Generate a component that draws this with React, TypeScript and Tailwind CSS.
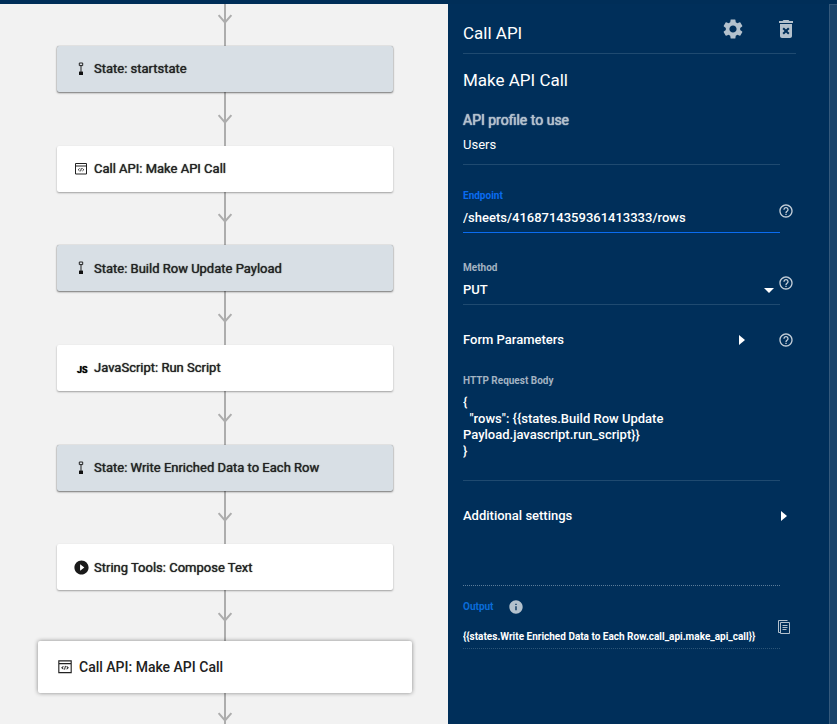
import type { ReactNode } from 'react';
import { MdDeleteForever, MdHelpOutline, MdInfo, MdPlayCircleFilled, MdSettings } from 'react-icons/md';

type Kind = 'state' | 'api' | 'js' | 'text';

const steps: { kind: Kind; label: string; selected?: boolean }[] = [
  { kind: 'state', label: 'State: startstate' },
  { kind: 'api', label: 'Call API: Make API Call' },
  { kind: 'state', label: 'State: Build Row Update Payload' },
  { kind: 'js', label: 'JavaScript: Run Script' },
  { kind: 'state', label: 'State: Write Enriched Data to Each Row' },
  { kind: 'text', label: 'String Tools: Compose Text' },
  { kind: 'api', label: 'Call API: Make API Call', selected: true },
];

function StepIcon({ kind, selected }: { kind: Kind; selected?: boolean }) {
  if (kind === 'state') {
    return (
      <svg viewBox="0 0 16 16" className="size-4" fill="none" stroke="#222" aria-hidden="true">
        <path d="M6.3 2h3.4v2.6H6.3z" strokeWidth="1" />
        <path d="M8 4.6V11" strokeWidth="1" />
        <path d="M6 10.6h4v3.4H6z" fill="#111" stroke="none" />
      </svg>
    );
  }
  if (kind === 'api') {
    return (
      <svg
        viewBox="0 0 16 16"
        className={`shrink-0 ${selected ? 'size-[18px]' : 'size-4'}`}
        fill="none"
        stroke="#222"
        aria-hidden="true"
      >
        <path d="M2.5 2.5h11v10.5h-11zM2.5 5h11" strokeWidth="1" />
        <path d="M6.6 7.4L5.2 8.7l1.4 1.3M9.4 7.4l1.4 1.3L9.4 10M8.4 7.1l-.8 3.2" strokeWidth="0.9" />
      </svg>
    );
  }
  if (kind === 'js') {
    return <span className="flex size-4 items-end text-[9px] leading-[12px] font-bold text-black pl-1">JS</span>;
  }
  return <MdPlayCircleFilled className="size-[17px] shrink-0 text-[#1a1a1a]" aria-hidden="true" />;
}

function Connector({ first, last }: { first?: boolean; last?: boolean }) {
  const size = first ? 'h-[42px]' : last ? 'h-[34px]' : 'min-h-12 flex-1';
  return (
    <div className={`flex flex-col items-center ${size}`} aria-hidden="true">
      <div className="w-[2px] flex-1 bg-[#adadad]" />
      <svg viewBox="0 0 16 10" className="h-[10px] w-4" fill="none" stroke="#adadad" strokeWidth="2">
        <path d="M8 0v10M1.6 1.2L8 8.4l6.4-7.2" />
      </svg>
      <div className={`w-[2px] bg-[#adadad] ${last ? 'h-[2px]' : 'h-[22px]'}`} />
    </div>
  );
}

function StepCard({ kind, label, selected }: { kind: Kind; label: string; selected?: boolean }) {
  const look = selected
    ? 'z-10 -my-[3px] h-[52px] w-[374px] gap-1.5 bg-white pl-[19px] text-[14px] font-medium shadow-[0_0_4px_rgba(0,0,0,0.45)]'
    : kind === 'state'
      ? 'h-[46px] w-[336px] gap-[5px] bg-[#d8dfe5] pl-4 text-[13px] [text-shadow:0_0_1px_currentColor] shadow-[0_1px_2px_rgba(0,0,0,0.5),0_0_1px_rgba(0,0,0,0.4)]'
      : 'h-[46px] w-[336px] gap-[5px] bg-white pl-4 text-[13px] [text-shadow:0_0_1px_currentColor] shadow-[0_1px_2px_rgba(0,0,0,0.35)]';
  return (
    <button
      type="button"
      className={`relative flex shrink-0 items-center rounded-[2px] text-left text-[#222] ${look}`}
    >
      <span className="flex w-4 justify-center">
        <StepIcon kind={kind} selected={selected} />
      </span>
      <span className="whitespace-nowrap">{label}</span>
    </button>
  );
}

function Help({ topic }: { topic: string }) {
  return (
    <button type="button" aria-label={`Help: ${topic}`} className="-ml-0.5 size-4 text-[#c3ced8]">
      <MdHelpOutline className="size-4" />
    </button>
  );
}

function Row({ children, side }: { children: ReactNode; side?: ReactNode }) {
  return (
    <div className="grid grid-cols-[minmax(0,1fr)_16px] items-center">
      <div>{children}</div>
      {side}
    </div>
  );
}

const smallLabel = 'block text-[10px] leading-4 font-bold';

export default function App() {
  return (
    <div className="flex min-h-screen flex-col bg-[#002f5a] font-[Roboto,'Liberation_Sans',sans-serif]">
      <div className="h-1 bg-[#002e58]" />
      <div className="flex flex-1">
        <main className="flex min-w-0 flex-1 flex-col items-center overflow-hidden bg-[#f2f2f2] pl-0.5">
          <Connector first />
          {steps.map((step, i) => (
            <div key={i} className={`flex flex-col items-center ${i < steps.length - 1 ? 'flex-1' : ''}`}>
              <StepCard {...step} />
              <Connector last={i === steps.length - 1} />
            </div>
          ))}
        </main>

        <aside className="flex w-[389px] shrink-0 text-white">
          <div className="min-w-0 flex-1 pr-[33px] pl-[15px]">
            <header className="flex h-[50px] items-center border-b border-[#1f4a70]">
              <h1 className="flex-1 pt-2 text-[17px] leading-6">Call API</h1>
              <button type="button" aria-label="Settings" className="mr-[29px] text-[#b3c1cd]">
                <MdSettings className="size-6" />
              </button>
              <button type="button" aria-label="Delete step" className="-mr-0.5 text-[#b3c1cd]">
                <MdDeleteForever className="size-6" />
              </button>
            </header>

            <h2 className="mt-[14px] text-[17px] leading-6">Make API Call</h2>

            <div className="mt-[18px]">
              <Row>
                <div className="border-b border-[#1f4a70] pb-2.5">
                  <label
                    htmlFor="profile"
                    className="block text-[14px] leading-5 text-[#b3c1cd] [text-shadow:0_0_1px_currentColor,0_0_1px_currentColor]"
                  >
                    API profile to use
                  </label>
                  <input
                    id="profile"
                    defaultValue="Users"
                    className="mt-1 block h-5 w-full bg-transparent text-[13px] outline-none"
                  />
                </div>
              </Row>
            </div>

            <div className="mt-[23px]">
              <Row side={<Help topic="Endpoint" />}>
                <div className="border-b border-[#0a6cf0] pb-1">
                  <label htmlFor="endpoint" className={`${smallLabel} text-[#0a6cf0]`}>
                    Endpoint
                  </label>
                  <input
                    id="endpoint"
                    defaultValue="/sheets/4168714359361413333/rows"
                    className="mt-0.5 block h-[22px] w-full bg-transparent text-[13px] font-medium outline-none"
                  />
                </div>
              </Row>
            </div>

            <div className="mt-[27px]">
              <Row side={<Help topic="Method" />}>
                <div className="border-b border-[#1f4a70] pb-[3px]">
                  <label htmlFor="method" className={`${smallLabel} text-[#a3b3c2]`}>
                    Method
                  </label>
                  <div className="mt-[3px] flex items-center pr-1.5">
                    <select
                      id="method"
                      defaultValue="PUT"
                      className="h-[22px] flex-1 appearance-none bg-transparent text-[13px] font-medium outline-none"
                    >
                      <option>PUT</option>
                    </select>
                    <svg viewBox="0 0 10 5" className="h-[5px] w-[10px]" fill="white" aria-hidden="true">
                      <path d="M0 0h10L5 5z" />
                    </svg>
                  </div>
                </div>
              </Row>
            </div>

            <div className="mt-[25px]">
              <Row side={<Help topic="Form Parameters" />}>
                <button
                  type="button"
                  className="flex w-full items-center justify-between pr-[35px] text-[13px] leading-5 font-medium"
                >
                  Form Parameters
                  <svg viewBox="0 0 6 10" className="h-[10px] w-1.5" fill="white" aria-hidden="true">
                    <path d="M0 0v10l6-5z" />
                  </svg>
                </button>
              </Row>
            </div>

            <div className="mt-[23px]">
              <Row>
                <div className="border-b border-[#1f4a70] pb-[21px]">
                  <label htmlFor="body" className={`${smallLabel} text-[#a3b3c2]`}>
                    HTTP Request Body
                  </label>
                  <textarea
                    id="body"
                    rows={4}
                    defaultValue={'{\n  "rows": {{states.Build Row Update\nPayload.javascript.run_script}}\n}'}
                    className="mt-1.5 block w-full resize-none overflow-hidden bg-transparent text-[13px] leading-4 font-medium outline-none"
                  />
                </div>
              </Row>
            </div>

            <button
              type="button"
              className="mt-[25px] flex w-full items-center justify-between pr-[9px] text-[13px] leading-5 font-medium"
            >
              Additional settings
              <svg viewBox="0 0 6 10" className="h-[10px] w-1.5" fill="white" aria-hidden="true">
                <path d="M0 0v10l6-5z" />
              </svg>
            </button>

            <div className="mt-[59px]">
              <Row
                side={
                  <button type="button" aria-label="Copy output" className="mt-5 -ml-1 size-4 text-[#b3c1cd]">
                    <svg viewBox="0 0 16 16" className="size-4" fill="none" stroke="currentColor">
                      <path d="M4.7 13.5H2.5v-12h9M4.5 3.5h9v11h-9z" />
                      <path d="M6.5 6.5h5M6.5 8.5h5M6.5 10.5h4" />
                    </svg>
                  </button>
                }
              >
                <div className="border-y border-t-[#5b7c99] border-b-[#2c5578] border-dotted pt-[11px] pb-1">
                  <div className="flex h-5 items-center gap-3.5">
                    <label htmlFor="output" className={`${smallLabel} text-[#0a6cd8]`}>
                      Output
                    </label>
                    <MdInfo className="size-4 text-[#b3c1cd]" aria-hidden="true" />
                  </div>
                  <input
                    id="output"
                    readOnly
                    defaultValue="{{states.Write Enriched Data to Each Row.call_api.make_api_call}}"
                    className="mt-[11px] block h-4 w-full bg-transparent text-[10px] font-bold outline-none"
                  />
                </div>
              </Row>
            </div>
          </div>
          <div className="w-2 border-t border-l border-[#35597b] bg-[#1a446b]" />
        </aside>
      </div>
    </div>
  );
}
